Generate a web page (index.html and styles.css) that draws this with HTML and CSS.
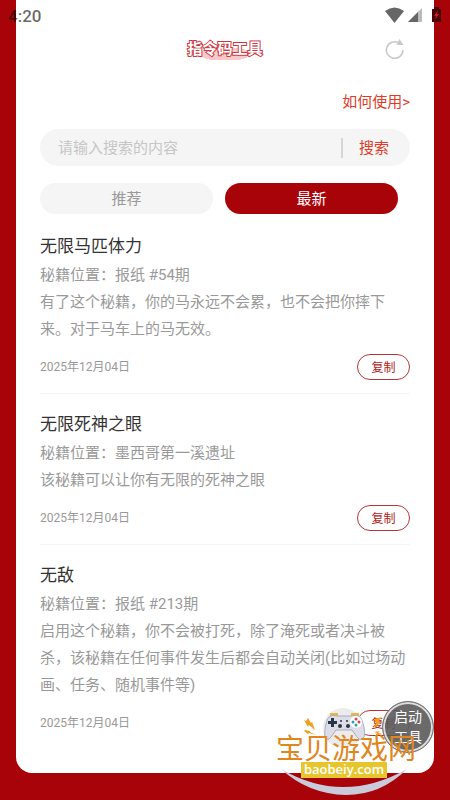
FILE: index.html
```html
<!DOCTYPE html>
<html lang="zh-CN">
<head>
<meta charset="utf-8">
<meta name="viewport" content="width=device-width, initial-scale=1">
<title>指令码工具</title>
<link rel="stylesheet" href="styles.css">
</head>
<body>
<div class="status">
  <span class="clock">4:20</span>
  <svg class="status-icons" viewBox="0 0 58 18" width="58" height="18" aria-hidden="true">
    <path fill="#666" d="M0 5Q9.500 -2 19 5L9.500 17Z"/>
    <path fill="#bbb" d="M37 2v14h-14z"/>
    <path fill="#666" d="M33 6v10h-10z"/>
    <path fill="#4a0508" d="M47 3h2V1h5v2h2v13h-9z"/>
    <path fill="#c8202a" d="M53 4l-4 6h2l-1 4 4-6h-2z"/>
  </svg>
</div>
<main class="card">
  <header class="top">
    <h1 class="brand">指令码工具</h1>
    <button class="refresh" aria-label="刷新">
      <svg viewBox="0 0 20 20" width="20" height="20"><path d="M14 4A8.300 8.300 0 1 0 18 11" fill="none" stroke="#c9c9c9" stroke-width="1.600"/><path d="M14.500 0l4 6h-7z" fill="#c9c9c9"/></svg>
    </button>
  </header>
  <a class="help" href="#">如何使用&gt;</a>
  <form class="search">
    <input class="search-input" type="text" aria-label="搜索内容" placeholder="请输入搜索的内容">
    <button class="search-button" type="button">搜索</button>
  </form>
  <nav class="tabs">
    <button class="tab">推荐</button>
    <button class="tab active">最新</button>
  </nav>
  <section class="list">
    <article class="item">
      <h2>无限马匹体力</h2>
      <p>秘籍位置：报纸 #54期</p>
      <p>有了这个秘籍，你的马永远不会累，也不会把你摔下来。对于马车上的马无效。</p>
      <footer><time>2025年12月04日</time><button class="copy">复制</button></footer>
    </article>
    <article class="item">
      <h2>无限死神之眼</h2>
      <p>秘籍位置：墨西哥第一溪遗址</p>
      <p>该秘籍可以让你有无限的死神之眼</p>
      <footer><time>2025年12月04日</time><button class="copy">复制</button></footer>
    </article>
    <article class="item">
      <h2>无敌</h2>
      <p>秘籍位置：报纸 #213期</p>
      <p>启用这个秘籍，你不会被打死，除了淹死或者决斗被杀，该秘籍在任何事件发生后都会自动关闭(比如过场动画、任务、随机事件等)</p>
      <footer><time>2025年12月04日</time><button class="copy">复制</button></footer>
    </article>
  </section>
</main>
<button class="launch">启动<br>工具</button>
<div class="watermark">
  <svg class="pad" viewBox="0 0 140 100" width="140" height="100" aria-hidden="true">
    <circle cx="67" cy="28" r="20" fill="#ececee"/>
    <path fill="#f0a01e" d="M32 18l3 5 1-1 3 8-6-5-1 2-4-7 2 1zM29 30l5 1 0 1 6 3-7-2-1 1-4-3z"/>
    <path fill="#f0a01e" d="M98 19l8-2-4 5 4 0-9 6 3-5zM98 32l6-1-2 2 5 1-8 2 2-3z"/>
    <path fill="#e8b93c" d="M54 13h8v3h-8zM75 13h8v3h-8z"/>
    <path fill="#dcdde6" stroke="#aaadbd" d="M53 17Q57 14 61 16H75Q80 14 84 17C87 20 90 33 88 37Q85 42 81 37L76 30H60L55 37Q51 42 49 37C48 33 50 20 53 17z"/>
    <path fill="#293548" d="M55 18h3v3h3v3h-3v3h-3v-3h-3v-3h3z"/>
    <g fill="#293548"><circle cx="64" cy="26" r="2"/><circle cx="72" cy="26" r="2"/><circle cx="65" cy="21" r="1"/><circle cx="71" cy="21" r="1"/></g>
    <circle cx="80" cy="22" r="6" fill="#fff"/>
    <g><circle cx="80" cy="19" r="1.500" fill="#de4545"/><circle cx="83" cy="22" r="1.500" fill="#de4545"/><circle cx="77" cy="22" r="1.500" fill="#2e9eb5"/><circle cx="80" cy="25" r="1.500" fill="#2e9eb5"/></g>
    <path fill="#c9cbdb" d="M5 69Q67 105 131 69Q105 95 70 95Q32 94 5 69z"/>
  </svg>
  <span class="wm-name">宝贝游戏网</span>
  <span class="wm-url">baobeiy.com</span>
</div>
</body>
</html>
```
FILE: styles.css
```css
* { box-sizing: border-box; }

body {
  margin: 0;
  min-height: 100vh;
  padding: 0 16px 27px;
  background: #a70309;
  font-family: Roboto, "Noto Sans CJK SC", sans-serif;
  font-size: 15px;
  color: #999;
}

button, input { font: inherit; border: 0; padding: 0; margin: 0; background: none; }
h1, h2, p { margin: 0; font-weight: 400; }

.status {
  position: absolute;
  top: 0;
  left: 0;
  right: 0;
  display: flex;
  justify-content: space-between;
  padding: 6px 7px 0 8px;
}
.clock { font-size: 17px; line-height: 20px; font-weight: 500; color: rgba(0, 0, 0, 0.6); }

.card {
  padding: 36px 24px 24px;
  background: #fff;
  border-radius: 0 0 16px 16px;
}

.top { display: grid; grid-template-columns: 1fr auto 1fr; align-items: center; height: 26px; }
.brand {
  grid-column: 2;
  font-size: 15px;
  line-height: 22px;
  font-weight: 700;
  color: #fff;
  -webkit-text-stroke: 2px #c93a40;
  paint-order: stroke fill;
  background: radial-gradient(ellipse 26px 7px at 50% 16px, #f8c8ca 98%, transparent);
}
.refresh { justify-self: end; margin-right: 5px; height: 20px; }

.help { display: block; margin-top: 29px; line-height: 22px; text-align: right; color: #dc3c28; text-decoration: none; }

.search { display: flex; align-items: center; height: 37px; margin-top: 16px; border-radius: 19px; background: #f5f5f5; }
.search-input { flex: 1; min-width: 0; height: 37px; padding-left: 18px; outline: 0; }
.search-input::placeholder { color: #c6c6c6; opacity: 1; }
.search-button { width: 69px; height: 20px; padding-right: 5px; line-height: 20px; border-left: 2px solid #d6d6d6; color: #dc3c28; }

.tabs { display: flex; margin-top: 17px; }
.tab { flex: 1; height: 31px; padding-bottom: 2px; margin-right: 12px; border-radius: 16px; background: #f5f5f5; color: #999; }
.active { background: #a70309; color: #fff; }

.list { margin-top: 2px; }
.item { padding: 15px 0 13px; border-bottom: 1px solid #f5f5f5; }
.item:last-child { border: 0; }
.item h2 { font-size: 17px; line-height: 31px; color: #333; }
.item p { line-height: 27px; }
.item footer { display: flex; justify-content: space-between; align-items: center; margin-top: 11px; font-size: 12px; }
.item time { padding-bottom: 3px; }
.copy { width: 53px; height: 26px; padding-bottom: 1px; border: 1px solid #b5343a; border-radius: 13px; color: #b01c22; }

.launch {
  position: absolute;
  top: 701px;
  right: 16px;
  width: 52px;
  height: 52px;
  border: 1px solid #777;
  border-radius: 50%;
  box-shadow: inset 0 0 0 2px #ddd;
  background: rgba(90, 90, 90, 0.9);
  color: #fff;
  font-size: 14px;
  line-height: 20px;
}

.watermark { position: absolute; top: 700px; right: 34px; width: 140px; height: 100px; }
.pad { position: absolute; top: 0; left: 0; }
.wm-name { position: absolute; top: 33px; left: 0; font-size: 28px; line-height: 34px; color: #df861d; white-space: nowrap; }
.wm-url {
  position: absolute;
  top: 62px;
  left: 25px;
  width: 86px;
  height: 16px;
  background: #e6c62e;
  color: #fff;
  font-family: "Open Sans", sans-serif;
  font-size: 13px;
  font-weight: 600;
  line-height: 15px;
  text-align: center;
}
```
